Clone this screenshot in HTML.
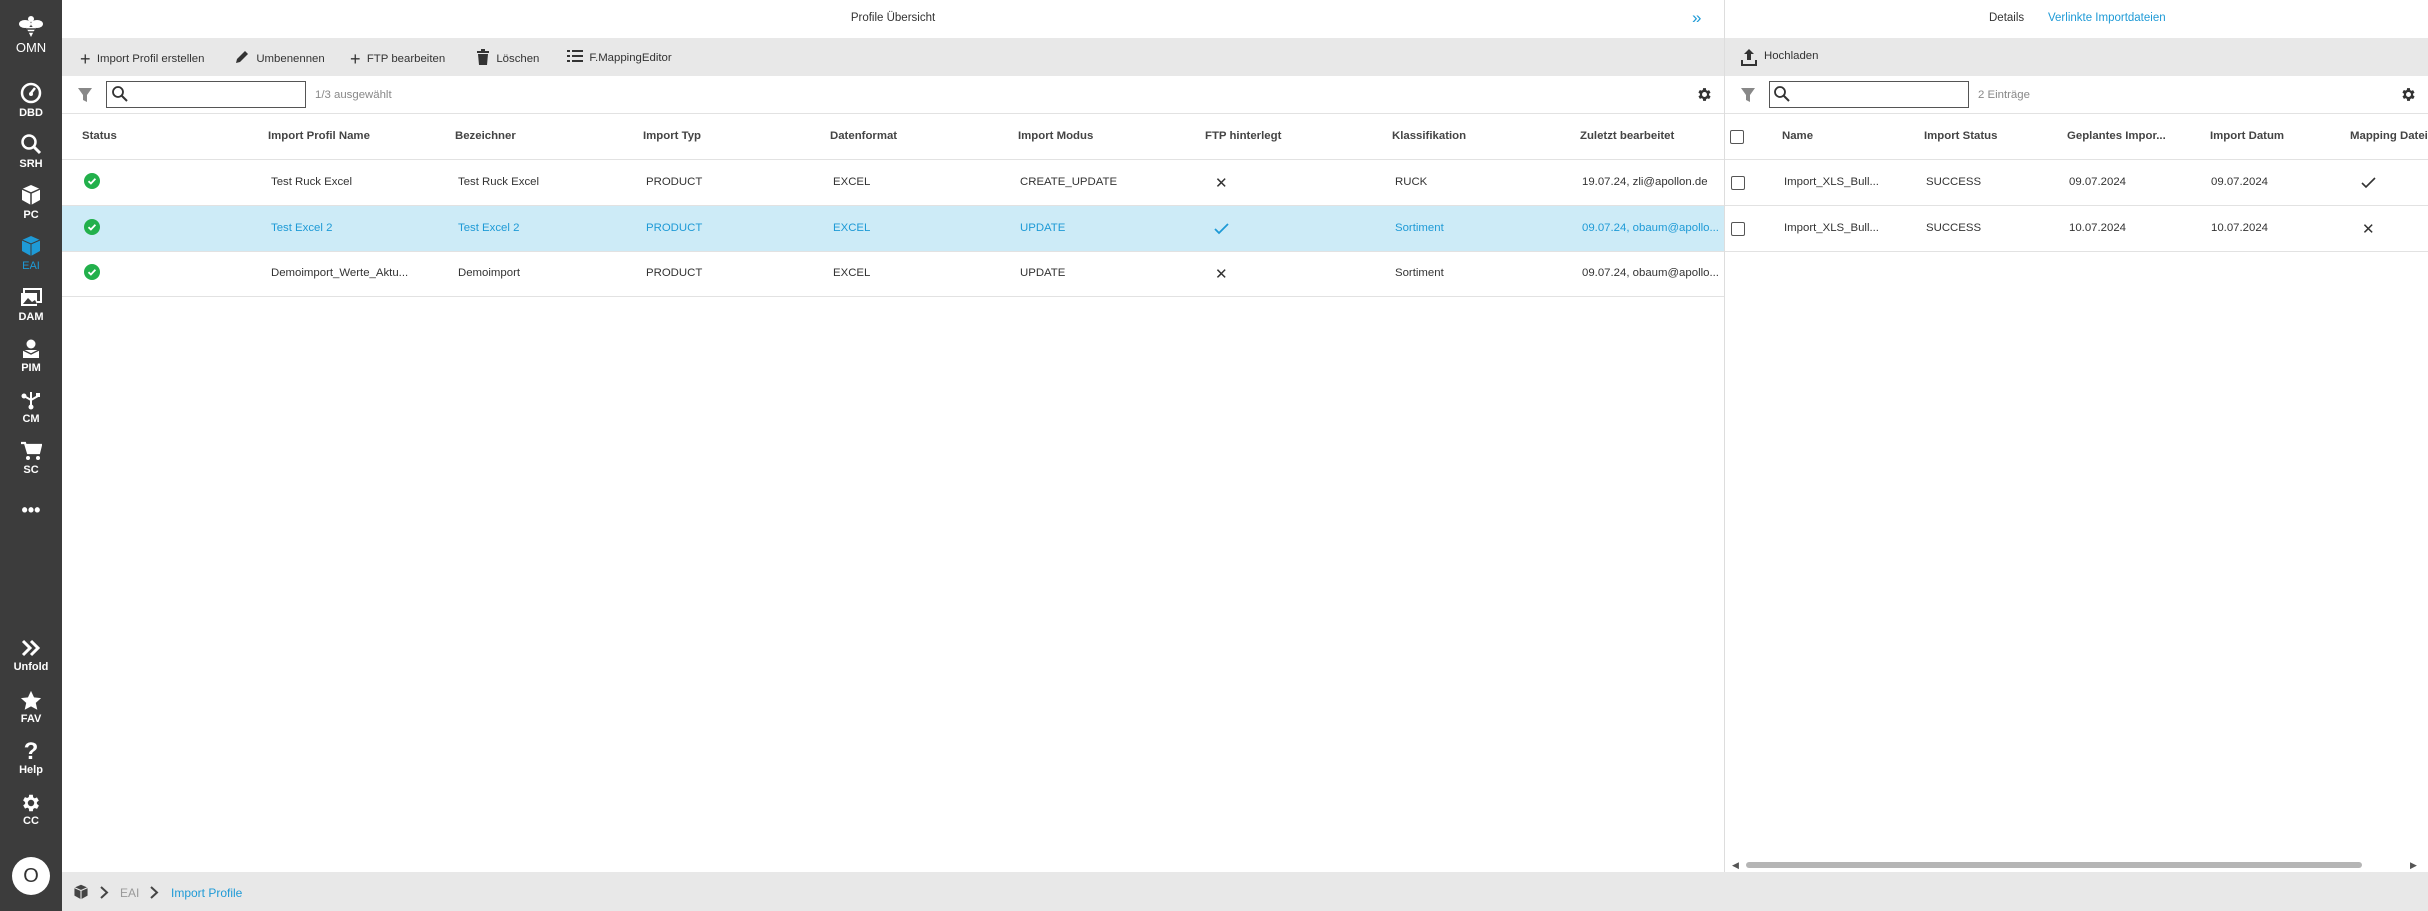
<!DOCTYPE html>
<html><head><meta charset="utf-8"><style>
*{margin:0;padding:0;box-sizing:border-box}
body{width:2428px;height:911px;overflow:hidden;background:#fff;font-family:"Liberation Sans",sans-serif;font-size:11.4px;color:#333;position:relative}
.a{position:absolute}
#sb{left:0;top:0;width:62px;height:911px;background:#3c3c3c}
.si{position:absolute;left:0;width:62px;text-align:center;color:#fff;font-size:11px;font-weight:bold}
.si svg{display:block;margin:0 auto}
.bar{background:#e8e8e8}
.t{white-space:nowrap}
.hd{font-weight:bold;color:#444}
.line{height:1px;background:#e2e2e2}
.blue{color:#1e9ad6}
.cb{width:14px;height:14px;border:1.5px solid #555;border-radius:2px;background:#fff}
.chev{font-size:22px;color:#444;line-height:20px}
</style></head><body>
<div id="sb" class="a">
 <div class="si" style="top:14px"><svg width="26" height="24" viewBox="0 0 26 24"><circle cx="13" cy="5" r="3" fill="#fff"/><ellipse cx="7" cy="10" rx="6" ry="4" fill="#fff"/><ellipse cx="19" cy="10" rx="6" ry="4" fill="#fff"/><path d="M8 13h10l-5 10z" fill="#fff"/><path d="M9 15h8M10 18h6" stroke="#3c3c3c" stroke-width="1.5"/></svg><div style="font-size:13px;font-weight:normal;margin-top:2px">OMN</div></div>
 <div class="si" style="top:82px"><svg width="22" height="22" viewBox="0 0 22 22"><circle cx="11" cy="11" r="9" fill="none" stroke="#fff" stroke-width="2.5"/><path d="M11 11l4-5" stroke="#fff" stroke-width="2.5"/><circle cx="11" cy="12" r="2" fill="#fff"/></svg><div style="margin-top:3px">DBD</div></div>
 <div class="si" style="top:133px"><svg width="22" height="22" viewBox="0 0 22 22"><circle cx="9" cy="9" r="6.5" fill="none" stroke="#fff" stroke-width="2.5"/><path d="M14 14l6 6" stroke="#fff" stroke-width="3"/></svg><div style="margin-top:3px">SRH</div></div>
 <div class="si" style="top:184px"><svg width="22" height="22" viewBox="0 0 22 22"><path d="M11 1l9 4v11l-9 5-9-5V5z" fill="#fff"/><path d="M2 5l9 4 9-4M11 9v12" stroke="#3c3c3c" stroke-width="1.5" fill="none"/></svg><div style="margin-top:3px">PC</div></div>
 <div class="si" style="top:235px;color:#1e9ad6"><svg width="22" height="22" viewBox="0 0 22 22"><path d="M11 1l9 4v11l-9 5-9-5V5z" fill="#1e9ad6"/><path d="M2 5l9 4 9-4M11 9v12" stroke="#3c3c3c" stroke-width="1" fill="none"/></svg><div style="margin-top:3px;font-weight:normal">EAI</div></div>
 <div class="si" style="top:288px"><svg width="22" height="20" viewBox="0 0 22 20"><rect x="4" y="1" width="17" height="13" fill="none" stroke="#fff" stroke-width="2"/><rect x="1" y="5" width="16" height="13" fill="#fff"/><path d="M3 16l5-6 4 4 3-2 2 4z" fill="#3c3c3c"/></svg><div style="margin-top:3px">DAM</div></div>
 <div class="si" style="top:339px"><svg width="20" height="20" viewBox="0 0 20 20"><circle cx="10" cy="5" r="4.5" fill="#fff"/><path d="M2 11h16v8H2z" fill="#fff"/><path d="M2 11l8 4 8-4" stroke="#3c3c3c" stroke-width="1.3" fill="none"/></svg><div style="margin-top:3px">PIM</div></div>
 <div class="si" style="top:390px"><svg width="20" height="20" viewBox="0 0 20 20"><path d="M10 2v16M10 10l-7-4M10 10l7-4" stroke="#fff" stroke-width="2"/><circle cx="10" cy="17" r="2.5" fill="#fff"/><circle cx="3" cy="6" r="2.5" fill="#fff"/><rect x="15" y="3" width="4" height="4" fill="#fff"/></svg><div style="margin-top:3px">CM</div></div>
 <div class="si" style="top:441px"><svg width="22" height="20" viewBox="0 0 22 20"><path d="M1 2h4l3 10h11l2-8H6" fill="none" stroke="#fff" stroke-width="2.2"/><path d="M7 5h13l-2 7H8z" fill="#fff"/><circle cx="8" cy="17" r="2" fill="#fff"/><circle cx="18" cy="17" r="2" fill="#fff"/></svg><div style="margin-top:3px">SC</div></div>
 <div class="si" style="top:500px;font-size:18px">•••</div>
 <div class="si" style="top:638px"><svg width="22" height="20" viewBox="0 0 22 20"><path d="M3 3l7 7-7 7M11 3l7 7-7 7" fill="none" stroke="#fff" stroke-width="3"/></svg><div style="margin-top:3px">Unfold</div></div>
 <div class="si" style="top:690px"><svg width="22" height="22" viewBox="0 0 24 24"><path d="M12 1l3.3 7 7.7.8-5.8 5.2 1.7 7.6L12 17.8 5.1 21.6l1.7-7.6L1 8.8l7.7-.8z" fill="#fff"/></svg><div style="margin-top:1px">FAV</div></div>
 <div class="si" style="top:741px;font-size:24px;line-height:22px">?<div style="font-size:11px;line-height:13px;margin-top:1px">Help</div></div>
 <div class="si" style="top:792px"><svg width="22" height="22" viewBox="0 0 24 24"><path fill="#fff" d="M19.4 13a7.5 7.5 0 000-2l2.1-1.6-2-3.5-2.5 1a7 7 0 00-1.7-1L15 3h-4l-.4 2.6a7 7 0 00-1.7 1l-2.5-1-2 3.5L6.6 11a7.5 7.5 0 000 2l-2.1 1.6 2 3.5 2.5-1c.5.4 1.1.7 1.7 1L11 21h4l.4-2.6c.6-.3 1.2-.6 1.7-1l2.5 1 2-3.5zM13 15.5a3.5 3.5 0 110-7 3.5 3.5 0 010 7z" transform="translate(-1 0)"/></svg><div style="margin-top:1px">CC</div></div>
 <div class="a" style="left:12px;top:857px;width:38px;height:38px;border-radius:50%;background:#fff;color:#333;font-size:20px;text-align:center;line-height:38px">O</div>
</div>

<!-- left pane -->
<div class="a t" style="left:62px;width:1662px;top:12px;text-align:center;font-size:11.5px">Profile Übersicht</div>
<div class="a" style="left:1692px;top:8px;color:#1e9ad6;font-size:17px">»</div>
<div class="a bar" style="left:62px;top:38px;width:1662px;height:38px"></div>
<div class="a t" style="left:80px;top:49px">
<span style="font-size:18px;vertical-align:-3px">+</span>&nbsp; Import Profil erstellen
</div>
<div class="a t" style="left:234px;top:49px"><svg width="16" height="16" viewBox="0 0 16 16" style="vertical-align:-3px"><path d="M2 14l1-4 8-8 3 3-8 8z" fill="#333"/></svg>&nbsp; Umbenennen</div>
<div class="a t" style="left:350px;top:49px"><span style="font-size:18px;vertical-align:-3px">+</span>&nbsp; FTP bearbeiten</div>
<div class="a t" style="left:476px;top:49px"><svg width="14" height="16" viewBox="0 0 14 16" style="vertical-align:-3px"><path d="M1 2h12v2H1zM5 0h4v2H5zM2 5h10l-1 11H3z" fill="#333"/></svg>&nbsp; Löschen</div>
<div class="a t" style="left:567px;top:49px"><svg width="16" height="14" viewBox="0 0 16 14" style="vertical-align:-2px"><path d="M0 1h3v2H0zM5 1h11v2H5zM0 6h3v2H0zM5 6h11v2H5zM0 11h3v2H0zM5 11h11v2H5z" fill="#333"/></svg>&nbsp; F.MappingEditor</div>

<svg class="a" style="left:77px;top:87px" width="16" height="16" viewBox="0 0 16 16"><path d="M1 1h14l-5 7v7l-4-2V8z" fill="#888"/></svg>
<div class="a" style="left:106px;top:81px;width:200px;height:27px;border:1.5px solid #555;background:#fff"></div>
<svg class="a" style="left:111px;top:85px" width="18" height="18" viewBox="0 0 18 18"><circle cx="7" cy="7" r="5" fill="none" stroke="#333" stroke-width="1.8"/><path d="M11 11l5 5" stroke="#333" stroke-width="2"/></svg>
<div class="a t" style="left:315px;top:89px;color:#888">1/3 ausgewählt</div>
<svg class="a" style="left:1696px;top:86px" width="17" height="17" viewBox="0 0 24 24"><path fill="#333" d="M19.4 13a7.5 7.5 0 000-2l2.1-1.6-2-3.5-2.5 1a7 7 0 00-1.7-1L15 3h-4l-.4 2.6a7 7 0 00-1.7 1l-2.5-1-2 3.5L6.6 11a7.5 7.5 0 000 2l-2.1 1.6 2 3.5 2.5-1c.5.4 1.1.7 1.7 1L11 21h4l.4-2.6c.6-.3 1.2-.6 1.7-1l2.5 1 2-3.5zM13 15.5a3.5 3.5 0 110-7 3.5 3.5 0 010 7z" transform="translate(-1 0)"/></svg>
<div class="a line" style="left:62px;top:113px;width:1662px"></div>

<div class="a hd t" style="left:82px;top:130px">Status</div>
<div class="a hd t" style="left:268px;top:130px">Import Profil Name</div>
<div class="a hd t" style="left:455px;top:130px">Bezeichner</div>
<div class="a hd t" style="left:643px;top:130px">Import Typ</div>
<div class="a hd t" style="left:830px;top:130px">Datenformat</div>
<div class="a hd t" style="left:1018px;top:130px">Import Modus</div>
<div class="a hd t" style="left:1205px;top:130px">FTP hinterlegt</div>
<div class="a hd t" style="left:1392px;top:130px">Klassifikation</div>
<div class="a hd t" style="left:1580px;top:130px">Zuletzt bearbeitet</div>
<div class="a line" style="left:62px;top:159px;width:1662px"></div>

<div class="a" style="left:62px;top:206px;width:1662px;height:45px;background:#cdebf7"></div>
<div class="a line" style="left:62px;top:205px;width:1662px"></div>
<div class="a line" style="left:62px;top:251px;width:1662px"></div>
<div class="a line" style="left:62px;top:296px;width:1662px"></div>

<div class="a t" style="top:176px;left:0">
<svg class="a" style="left:84px;top:-3px" width="16" height="16"><circle cx="8" cy="8" r="8" fill="#22b04b"/><path d="M4.5 8.2l2.4 2.3 4.5-4.8" stroke="#fff" stroke-width="1.8" fill="none"/></svg>
<span class="a" style="left:271px">Test Ruck Excel</span><span class="a" style="left:458px">Test Ruck Excel</span><span class="a" style="left:646px">PRODUCT</span><span class="a" style="left:833px">EXCEL</span><span class="a" style="left:1020px">CREATE_UPDATE</span><span class="a" style="left:1215px;font-size:15px;top:-2px">✕</span><span class="a" style="left:1395px">RUCK</span><span class="a" style="left:1582px">19.07.24, zli@apollon.de</span></div>
<div class="a t blue" style="top:222px;left:0">
<svg class="a" style="left:84px;top:-3px" width="16" height="16"><circle cx="8" cy="8" r="8" fill="#22b04b"/><path d="M4.5 8.2l2.4 2.3 4.5-4.8" stroke="#fff" stroke-width="1.8" fill="none"/></svg>
<span class="a" style="left:271px">Test Excel 2</span><span class="a" style="left:458px">Test Excel 2</span><span class="a" style="left:646px">PRODUCT</span><span class="a" style="left:833px">EXCEL</span><span class="a" style="left:1020px">UPDATE</span><svg class="a" style="left:1214px;top:0" width="16" height="13"><path d="M1 7l4 4 9-9" stroke="#1e9ad6" stroke-width="1.8" fill="none"/></svg><span class="a" style="left:1395px">Sortiment</span><span class="a" style="left:1582px">09.07.24, obaum@apollo...</span></div>
<div class="a t" style="top:267px;left:0">
<svg class="a" style="left:84px;top:-3px" width="16" height="16"><circle cx="8" cy="8" r="8" fill="#22b04b"/><path d="M4.5 8.2l2.4 2.3 4.5-4.8" stroke="#fff" stroke-width="1.8" fill="none"/></svg>
<span class="a" style="left:271px">Demoimport_Werte_Aktu...</span><span class="a" style="left:458px">Demoimport</span><span class="a" style="left:646px">PRODUCT</span><span class="a" style="left:833px">EXCEL</span><span class="a" style="left:1020px">UPDATE</span><span class="a" style="left:1215px;font-size:15px;top:-2px">✕</span><span class="a" style="left:1395px">Sortiment</span><span class="a" style="left:1582px">09.07.24, obaum@apollo...</span></div>

<div class="a" style="left:1724px;top:0;width:1px;height:872px;background:#ddd"></div>

<!-- right pane -->
<div class="a t" style="left:1989px;top:12px;font-size:11.5px">Details</div>
<div class="a t blue" style="left:2048px;top:12px;font-size:11.5px">Verlinkte Importdateien</div>
<div class="a bar" style="left:1725px;top:38px;width:703px;height:38px"></div>
<svg class="a" style="left:1741px;top:48px" width="16" height="18" viewBox="0 0 16 18"><path d="M8 1l5 5h-3v6H6V6H3z" fill="#333"/><path d="M1 12v5h14v-5" stroke="#333" stroke-width="2" fill="none"/></svg>
<div class="a t" style="left:1764px;top:50px">Hochladen</div>
<svg class="a" style="left:1740px;top:87px" width="16" height="16" viewBox="0 0 16 16"><path d="M1 1h14l-5 7v7l-4-2V8z" fill="#888"/></svg>
<div class="a" style="left:1769px;top:81px;width:200px;height:27px;border:1.5px solid #555;background:#fff"></div>
<svg class="a" style="left:1773px;top:85px" width="18" height="18" viewBox="0 0 18 18"><circle cx="7" cy="7" r="5" fill="none" stroke="#333" stroke-width="1.8"/><path d="M11 11l5 5" stroke="#333" stroke-width="2"/></svg>
<div class="a t" style="left:1978px;top:89px;color:#888">2 Einträge</div>
<svg class="a" style="left:2400px;top:86px" width="17" height="17" viewBox="0 0 24 24"><path fill="#333" d="M19.4 13a7.5 7.5 0 000-2l2.1-1.6-2-3.5-2.5 1a7 7 0 00-1.7-1L15 3h-4l-.4 2.6a7 7 0 00-1.7 1l-2.5-1-2 3.5L6.6 11a7.5 7.5 0 000 2l-2.1 1.6 2 3.5 2.5-1c.5.4 1.1.7 1.7 1L11 21h4l.4-2.6c.6-.3 1.2-.6 1.7-1l2.5 1 2-3.5zM13 15.5a3.5 3.5 0 110-7 3.5 3.5 0 010 7z" transform="translate(-1 0)"/></svg>
<div class="a line" style="left:1725px;top:113px;width:703px"></div>
<div class="a cb" style="left:1730px;top:130px"></div>
<div class="a hd t" style="left:1782px;top:130px">Name</div>
<div class="a hd t" style="left:1924px;top:130px">Import Status</div>
<div class="a hd t" style="left:2067px;top:130px">Geplantes Impor...</div>
<div class="a hd t" style="left:2210px;top:130px">Import Datum</div>
<div class="a hd t" style="left:2350px;top:130px">Mapping Datei</div>
<div class="a line" style="left:1725px;top:159px;width:703px"></div>
<div class="a line" style="left:1725px;top:205px;width:703px"></div>
<div class="a line" style="left:1725px;top:251px;width:703px"></div>
<div class="a cb" style="left:1731px;top:176px"></div>
<div class="a cb" style="left:1731px;top:222px"></div>
<div class="a t" style="top:176px;left:0"><span class="a" style="left:1784px">Import_XLS_Bull...</span><span class="a" style="left:1926px">SUCCESS</span><span class="a" style="left:2069px">09.07.2024</span><span class="a" style="left:2211px">09.07.2024</span><svg class="a" style="left:2361px;top:0" width="15" height="13"><path d="M1 7l4 4 9-9" stroke="#333" stroke-width="1.6" fill="none"/></svg></div>
<div class="a t" style="top:222px;left:0"><span class="a" style="left:1784px">Import_XLS_Bull...</span><span class="a" style="left:1926px">SUCCESS</span><span class="a" style="left:2069px">10.07.2024</span><span class="a" style="left:2211px">10.07.2024</span><span class="a" style="left:2362px;font-size:15px;top:-2px">✕</span></div>
<div class="a" style="left:1732px;top:860px;font-size:9px;color:#555">◀</div>
<div class="a" style="left:1746px;top:862px;width:616px;height:6px;border-radius:3px;background:#b5b5b5"></div>
<div class="a" style="left:2410px;top:860px;font-size:9px;color:#555">▶</div>

<!-- footer -->
<div class="a bar" style="left:62px;top:872px;width:2366px;height:39px"></div>
<svg class="a" style="left:73px;top:884px" width="16" height="16" viewBox="0 0 22 22"><path d="M11 1l9 4v11l-9 5-9-5V5z" fill="#444"/><path d="M2 5l9 4 9-4M11 9v12" stroke="#e8e8e8" stroke-width="1.5" fill="none"/></svg>
<svg class="a" style="left:99px;top:886px" width="10" height="13"><path d="M2 1l6 5.5L2 12" stroke="#444" stroke-width="2" fill="none"/></svg>
<div class="a t" style="left:120px;top:886px;color:#999;font-size:12px">EAI</div>
<svg class="a" style="left:149px;top:886px" width="10" height="13"><path d="M2 1l6 5.5L2 12" stroke="#444" stroke-width="2" fill="none"/></svg>
<div class="a t blue" style="left:171px;top:886px;font-size:12px">Import Profile</div>
</body></html>
